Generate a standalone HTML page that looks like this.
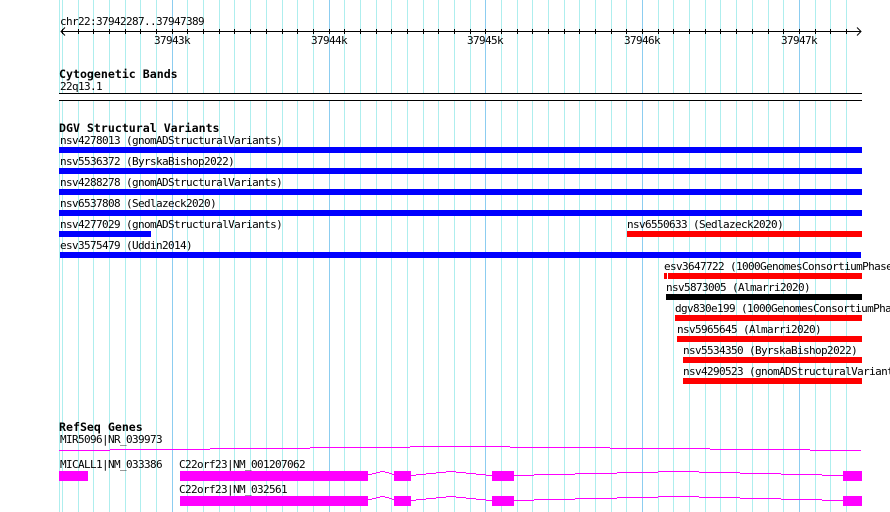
<!DOCTYPE html>
<html><head><meta charset="utf-8"><style>
html,body{margin:0;padding:0;background:#fff;width:890px;height:512px;overflow:hidden}
svg{display:block;position:absolute;left:0;top:0}
text{font-family:"DejaVu Sans Mono","Liberation Mono",monospace;font-size:11px;letter-spacing:-0.62px;fill:#000}
text.b{font-weight:bold;font-size:11.6px;letter-spacing:0}
</style></head><body>
<svg width="890" height="512" viewBox="0 0 890 512" xmlns="http://www.w3.org/2000/svg">
<g shape-rendering="crispEdges" fill="none">
<path stroke="#aeeeee" d="M59.5 0V512M62.5 0V512M78.5 0V512M93.5 0V512M109.5 0V512M125.5 0V512M140.5 0V512M156.5 0V512M187.5 0V512M203.5 0V512M219.5 0V512M234.5 0V512M250.5 0V512M266.5 0V512M282.5 0V512M297.5 0V512M313.5 0V512M344.5 0V512M360.5 0V512M376.5 0V512M391.5 0V512M407.5 0V512M423.5 0V512M438.5 0V512M454.5 0V512M470.5 0V512M501.5 0V512M517.5 0V512M532.5 0V512M548.5 0V512M564.5 0V512M579.5 0V512M595.5 0V512M611.5 0V512M626.5 0V512M658.5 0V512M673.5 0V512M689.5 0V512M705.5 0V512M720.5 0V512M736.5 0V512M752.5 0V512M768.5 0V512M783.5 0V512M815.5 0V512M830.5 0V512M846.5 0V512"/>
<path stroke="#8ccdf0" d="M172.5 0V512M329.5 0V512M485.5 0V512M642.5 0V512M799.5 0V512"/>
<path stroke="#000" d="M61 31.5H861M62.5 29V34M78.5 29V34M93.5 29V34M109.5 29V34M125.5 29V34M140.5 29V34M156.5 29V34M172.5 29V34M187.5 29V34M203.5 29V34M219.5 29V34M234.5 29V34M250.5 29V34M266.5 29V34M282.5 29V34M297.5 29V34M313.5 29V34M329.5 29V34M344.5 29V34M360.5 29V34M376.5 29V34M391.5 29V34M407.5 29V34M423.5 29V34M438.5 29V34M454.5 29V34M470.5 29V34M485.5 29V34M501.5 29V34M517.5 29V34M532.5 29V34M548.5 29V34M564.5 29V34M579.5 29V34M595.5 29V34M611.5 29V34M626.5 29V34M642.5 29V34M658.5 29V34M673.5 29V34M689.5 29V34M705.5 29V34M720.5 29V34M736.5 29V34M752.5 29V34M768.5 29V34M783.5 29V34M799.5 29V34M815.5 29V34M830.5 29V34M846.5 29V34"/>
<rect x="59" y="94" width="803" height="6" fill="#fff"/>
<rect x="59" y="93" width="803" height="1" fill="#000"/>
<rect x="59" y="100" width="803" height="1" fill="#000"/>
<rect x="59" y="147" width="803" height="6" fill="#0000ff"/>
<rect x="59" y="168" width="803" height="6" fill="#0000ff"/>
<rect x="59" y="189" width="803" height="6" fill="#0000ff"/>
<rect x="59" y="210" width="803" height="6" fill="#0000ff"/>
<rect x="59" y="231" width="92" height="6" fill="#0000ff"/>
<rect x="60" y="252" width="801" height="6" fill="#0000ff"/>
<rect x="627" y="231" width="235" height="6" fill="#ff0000"/>
<rect x="664" y="273" width="3" height="6" fill="#ff0000"/>
<rect x="668" y="273" width="194" height="6" fill="#ff0000"/>
<rect x="666" y="294" width="196" height="6" fill="#000"/>
<rect x="675" y="315" width="187" height="6" fill="#ff0000"/>
<rect x="677" y="336" width="185" height="6" fill="#ff0000"/>
<rect x="683" y="357" width="179" height="6" fill="#ff0000"/>
<rect x="683" y="378" width="179" height="6" fill="#ff0000"/>
<path stroke="#ff00ff" d="M59 450.5H110M110 449.5H210M210 448.5H310M310 447.5H410M410 446.5H510M510 447.5H610M610 448.5H710M710 449.5H810M810 450.5H861"/>
<path stroke="#ff00ff" d="M411 475.5H416M416 474.5H426M426 473.5H436M436 472.5H446M446 471.5H456M456 472.5H466M466 473.5H476M476 474.5H486M486 475.5H492M514 475.5H534M534 474.5H575M575 473.5H617M617 472.5H658M658 471.5H699M699 472.5H740M740 473.5H781M781 474.5H822M822 475.5H843"/>
<path stroke="#ff00ff" d="M411 500.5H416M416 499.5H426M426 498.5H436M436 497.5H446M446 496.5H456M456 497.5H466M466 498.5H476M476 499.5H486M486 500.5H492M514 500.5H534M534 499.5H575M575 498.5H617M617 497.5H658M658 496.5H699M699 497.5H740M740 498.5H781M781 499.5H822M822 500.5H843"/>
<path stroke="#ff00ff" d="M368 474.5H372M372 473.5H376M376 472.5H380M380 471.5H385M385 472.5H389M389 473.5H392M392 474.5H394M368 499.5H372M372 498.5H376M376 497.5H380M380 496.5H385M385 497.5H389M389 498.5H392M392 499.5H394"/>
<rect x="59" y="471" width="29" height="10" fill="#ff00ff"/>
<rect x="180" y="471" width="188" height="10" fill="#ff00ff"/>
<rect x="394" y="471" width="17" height="10" fill="#ff00ff"/>
<rect x="492" y="471" width="22" height="10" fill="#ff00ff"/>
<rect x="843" y="471" width="19" height="10" fill="#ff00ff"/>
<rect x="180" y="496" width="188" height="10" fill="#ff00ff"/>
<rect x="394" y="496" width="17" height="10" fill="#ff00ff"/>
<rect x="492" y="496" width="22" height="10" fill="#ff00ff"/>
<rect x="843" y="496" width="19" height="10" fill="#ff00ff"/>
</g>
<path fill="none" stroke="#000" d="M65 27.5L61 31.5L65 35.5M857 27.5L861 31.5L857 35.5"/>
<text x="60" y="25">chr22:37942287..37947389</text>
<text x="154" y="44">37943k</text>
<text x="311" y="44">37944k</text>
<text x="467" y="44">37945k</text>
<text x="624" y="44">37946k</text>
<text x="781" y="44">37947k</text>
<text class="b" x="59" y="78">Cytogenetic Bands</text>
<text x="60" y="90">22q13.1</text>
<text class="b" x="59" y="132">DGV Structural Variants</text>
<text x="60" y="144">nsv4278013 (gnomADStructuralVariants)</text>
<text x="60" y="165">nsv5536372 (ByrskaBishop2022)</text>
<text x="60" y="186">nsv4288278 (gnomADStructuralVariants)</text>
<text x="60" y="207">nsv6537808 (Sedlazeck2020)</text>
<text x="60" y="228">nsv4277029 (gnomADStructuralVariants)</text>
<text x="60" y="249">esv3575479 (Uddin2014)</text>
<text x="627" y="228">nsv6550633 (Sedlazeck2020)</text>
<text x="664" y="270">esv3647722 (1000GenomesConsortiumPhase3)</text>
<text x="666" y="291">nsv5873005 (Almarri2020)</text>
<text x="675" y="312">dgv830e199 (1000GenomesConsortiumPhase3)</text>
<text x="677" y="333">nsv5965645 (Almarri2020)</text>
<text x="683" y="354">nsv5534350 (ByrskaBishop2022)</text>
<text x="683" y="375">nsv4290523 (gnomADStructuralVariants)</text>
<text class="b" x="59" y="431">RefSeq Genes</text>
<text x="60" y="443">MIR5096|NR_039973</text>
<text x="60" y="468">MICALL1|NM_033386</text>
<text x="179" y="468">C22orf23|NM_001207062</text>
<text x="179" y="493">C22orf23|NM_032561</text>
</svg>
</body></html>
